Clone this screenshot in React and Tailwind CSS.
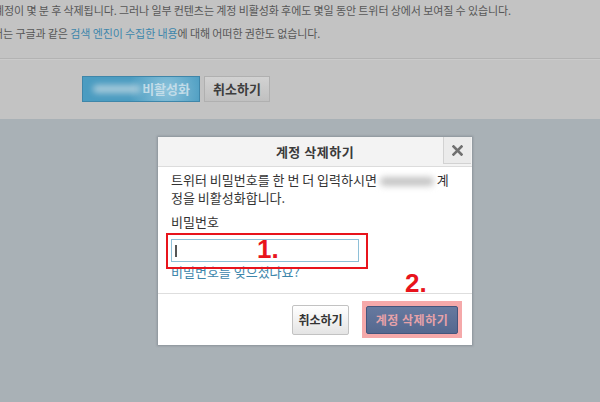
export default function App() {
  const font = { fontFamily: '"Noto Sans CJK KR", "Noto Sans", sans-serif' };
  return (
    <div className="relative w-[600px] h-[402px] overflow-hidden bg-[#a9b1b6]" style={font}>
      {/* page behind overlay */}
      <div className="h-[119px] bg-[#c3c3c3]">
        <div className="h-[59px] border-b border-[#b3b3b3] pt-[3px] text-[11px] leading-[14px] text-[#575757] tracking-[-0.1px] whitespace-nowrap">
          <p className="-ml-[6px]">계정이 몇 분 후 삭제됩니다. 그러나 일부 컨텐츠는 계정 비활성화 후에도 몇일 동안 트위터 상에서 보여질 수 있습니다.</p>
          <p className="-ml-[17px] mt-[9px]">
            에서는 구글과 같은 <span className="text-[#3d86ab]">검색 엔진이 수집한 내용</span>에 대해 어떠한 권한도 없습니다.
          </p>
        </div>
        <div className="border-t border-[#cbcbcb] pl-[82px] pt-[16px] flex gap-[4px]">
          <div className="w-[118px] h-[26px] border border-[#3f86a9] bg-[radial-gradient(circle_at_72%_55%,#8cc3db,#4b9cc1_45%)] flex items-center pl-[10px]">
            <div className="w-[48px] h-[8px] rounded-full bg-[#a9cbdb] blur-[3px]" />
            <span className="ml-auto mr-[9px] text-[13px] font-bold text-[#c2dce8]">비활성화</span>
          </div>
          <div className="w-[66px] h-[26px] border border-[#b0b0b0] bg-gradient-to-b from-[#d2d2d2] to-[#c0c0c0] flex items-center justify-center text-[13px] font-bold text-[#3d3d3d]">
            취소하기
          </div>
        </div>
      </div>

      {/* modal */}
      <div className="absolute left-[158px] top-[137px] w-[314px] h-[208px] bg-white shadow-[0_0_2px_1px_rgba(80,90,100,0.35)] flex flex-col">
        <div className="relative h-[30px] bg-[#f3f3f3] border-b border-[#dcdcdc] flex items-center justify-center">
          <span className="text-[13px] font-bold text-[#3a3a3a] tracking-[0.5px]">계정 삭제하기</span>
          <div className="absolute right-[1px] top-0 w-[28px] h-[27px] bg-[#ebebeb] border-l border-b border-[#d2d2d2] flex items-center justify-center">
            <svg width="11" height="11" viewBox="0 0 11 11">
              <path d="M1.5 1.5 L9.5 9.5 M9.5 1.5 L1.5 9.5" stroke="#707070" strokeWidth="2.6" strokeLinecap="square" />
            </svg>
          </div>
        </div>
        <div className="px-[13px] pt-[4px] text-[13px] leading-[18px] text-[#333]">
          <p className="whitespace-nowrap">
            트위터 비밀번호를 한 번 더 입력하시면 <span className="inline-block align-middle w-[54px] h-[9px] rounded-full bg-[#c4c4c4] blur-[3px]" /> 계
            <br />정을 비활성화합니다.
          </p>
          <p className="mt-[7px] leading-[16px]">비밀번호</p>
          <div className="mt-[9px] w-[188px] h-[23px] border border-[#8ec0d8] flex items-center pl-[3px]">
            <div className="w-[1.5px] h-[12px] bg-[#555]" />
          </div>
          <p className="mt-[2px] leading-[16px] text-[#3d86ab]">비밀번호를 잊으셨나요?</p>
        </div>
        <div className="mt-auto h-[52px] border-t border-[#dedede] flex items-center justify-end pr-[10px] gap-[13px]">
          <div className="w-[57px] h-[30px] rounded-[2px] border border-[#c2c2c2] bg-gradient-to-b from-[#ffffff] to-[#e4e4e4] flex items-center justify-center text-[12px] font-bold text-[#333]">
            취소하기
          </div>
          <div className="w-[100px] h-[37px] bg-[#f5a9aa] flex items-center justify-center">
            <div className="w-[92px] h-[28px] rounded-[2px] border border-[#44557c] bg-gradient-to-b from-[#66799f] to-[#55688f] flex items-center justify-center text-[12px] font-bold text-[#e7a2a9] tracking-[0.5px]">
              계정 삭제하기
            </div>
          </div>
        </div>
      </div>

      {/* annotations */}
      <div className="absolute left-[166px] top-[233px] w-[202px] h-[36px] border-2 border-[#e8141c]" />
      <span className="absolute left-[257px] top-[232px] text-[26px] leading-[34px] font-bold text-[#e8141c]" style={{ fontFamily: '"Liberation Sans", Arial, sans-serif' }}>1.</span>
      <span className="absolute left-[405px] top-[266px] text-[26px] leading-[34px] font-bold text-[#e8141c]" style={{ fontFamily: '"Liberation Sans", Arial, sans-serif' }}>2.</span>
    </div>
  );
}
